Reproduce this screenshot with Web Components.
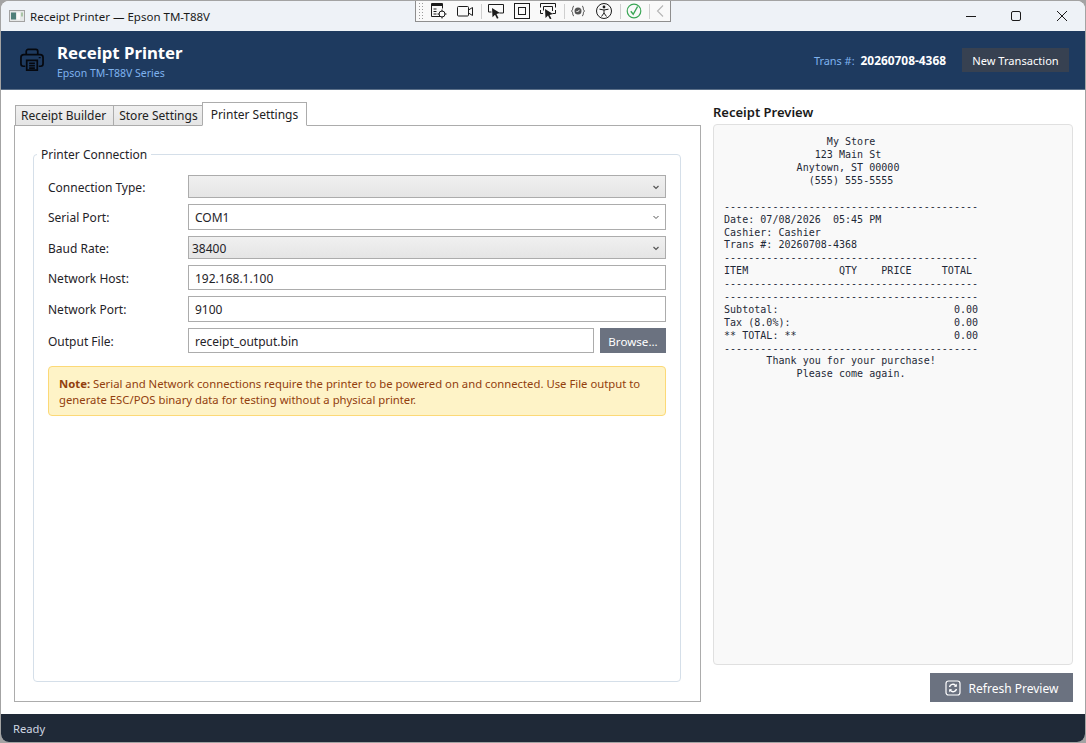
<!DOCTYPE html>
<html>
<head>
<meta charset="utf-8">
<title>Receipt Printer</title>
<style>
    html, body {
        margin: 0;
        height: 100%;
        background: #a3a3a3;
        overflow: hidden;
    }
    body {
        font-family: "Noto Sans", sans-serif;
        font-size: 12px;
        color: #1f2328;
    }
</style>
</head>
<body>
<app-window>
    <title-bar slot="title">Receipt Printer — Epson TM-T88V</title-bar>
    <dev-toolbar slot="overlay"></dev-toolbar>
    <app-header slot="header" trans="20260708-4368"></app-header>

    <tab-control slot="left">
        <tab-item slot="tabs" style="padding-right:7px">Receipt Builder</tab-item>
        <tab-item slot="tabs" style="padding-right:4px">Store Settings</tab-item>
        <tab-item slot="tabs" active>Printer Settings</tab-item>
        <group-box title="Printer Connection">
            <form-row label="Connection Type:" lower><combo-box gray></combo-box></form-row>
            <form-row label="Serial Port:"><combo-box>COM1</combo-box></form-row>
            <form-row label="Baud Rate:" lower><combo-box gray>38400</combo-box></form-row>
            <form-row label="Network Host:" lower><text-box short>192.168.1.100</text-box></form-row>
            <form-row label="Network Port:"><text-box>9100</text-box></form-row>
            <form-row label="Output File:" lower><text-box short>receipt_output.bin</text-box><app-button slot="after" browse>Browse...</app-button></form-row>
            <note-box><b>Note:</b> Serial and Network connections require the printer to be powered on and connected. Use File output to <br>generate ESC/POS binary data for testing without a physical printer.</note-box>
        </group-box>
    </tab-control>

    <receipt-preview slot="right">                 My Store
               123 Main St
            Anytown, ST 00000
              (555) 555-5555

------------------------------------------
Date: 07/08/2026  05:45 PM
Cashier: Cashier
Trans #: 20260708-4368
------------------------------------------
ITEM               QTY    PRICE     TOTAL
------------------------------------------
------------------------------------------
Subtotal:                             0.00
Tax (8.0%):                           0.00
** TOTAL: **                          0.00
------------------------------------------
       Thank you for your purchase!
            Please come again.</receipt-preview>

    <status-bar slot="status">Ready</status-bar>
</app-window>

<script>
class AppWindow extends HTMLElement {
    connectedCallback() {
        this.attachShadow({mode: 'open'}).innerHTML = `
<style>
    :host {
        display: grid;
        grid-template-rows: 30px 59px 1fr 28px;
        position: relative;
        margin: 1px;
        height: 741px;
        width: 1084px;
        background: #fff;
        border-radius: 8px;
        overflow: hidden;
    }
    .main {
        display: grid;
        grid-template-columns: 687px 360px;
        gap: 12px;
        padding: 12px 12px 12px 13px;
        min-height: 0;
    }
</style>
<slot name="title"></slot>
<slot name="header"></slot>
<div class="main">
    <slot name="left"></slot>
    <slot name="right"></slot>
</div>
<slot name="status"></slot>
<slot name="overlay"></slot>
        `;
    }
}

class TitleBar extends HTMLElement {
    connectedCallback() {
        this.attachShadow({mode: 'open'}).innerHTML = `
<style>
    :host {
        display: flex;
        align-items: center;
        background: #eef2f7;
        font-size: 11.5px;
        color: #1a1a1a;
        padding-left: 8px;
    }
    .app { width: 16px; height: 12px; margin-right: 5px; }
    .text { flex: 1; }
    .ctl { width: 46px; height: 30px; display: flex; align-items: center; justify-content: center; }
</style>
<svg class="app" viewBox="0 0 16 12">
    <rect x=".5" y=".5" width="15" height="11" fill="#e6e8e8" stroke="#a2a2a2"/>
    <rect x="2" y="2.500" width="5" height="7" fill="#4f7f7a"/>
    <rect x="8" y="2.500" width="3" height="7" fill="#fbfbfb"/>
    <rect x="12" y="2.500" width="2" height="4" fill="#a9c4a6"/>
</svg>
<span class="text"><slot></slot></span>
<span class="ctl" style="width:44px;padding-left:2px"><svg width="12" height="12" viewBox="0 0 12 12"><path d="M1 6.500h10" stroke="#1a1a1a" fill="none"/></svg></span>
<span class="ctl"><svg width="12" height="12" viewBox="0 0 12 12"><rect x="1.500" y="1.500" width="9" height="9" rx="1.500" stroke="#1a1a1a" fill="none"/></svg></span>
<span class="ctl"><svg width="12" height="12" viewBox="0 0 12 12"><path d="M1 1l10 10M11 1L1 11" stroke="#1a1a1a" fill="none"/></svg></span>
        `;
    }
}

class DevToolbar extends HTMLElement {
    connectedCallback() {
        this.attachShadow({mode: 'open'}).innerHTML = `
<style>
    :host {
        display: flex;
        align-items: center;
        position: absolute;
        left: 414px;
        top: -1px;
        width: 256px;
        height: 22px;
        box-sizing: border-box;
        background: #f9f9f9;
        border: 1px solid #8e8e8e;
    }
    svg { display: block; flex: none; width: 16px; height: 16px; }
    .grip {
        width: 6px; height: 18px; margin-left: 2px;
        background-image: radial-gradient(#9a9a9a 0.6px, transparent 0.7px);
        background-size: 3px 3px;
    }
    .sep { width: 1px; height: 15px; background: #cfcfcf; flex: none; }
    .s { fill: none; stroke: #1c1c1c; stroke-width: 1; }
</style>
<div class="grip"></div>
<svg style="margin-left:7px" viewBox="0 0 16 16"><path class="s" d="M9 13.500H.5V.5h11v5"/><path d="M1 1h10v2H1z" fill="#1c1c1c"/><path class="s" d="M2.500 6h3M2.500 8.500h3M2.500 11h3"/><circle class="s" cx="11" cy="11" r="3"/><path class="s" d="M11 6.500v2M11 13.500v2M6.500 11h2M13.500 11h2"/></svg>
<svg style="margin-left:10px" viewBox="0 0 16 16"><rect class="s" x=".5" y="3.500" width="11" height="9.500" rx="1"/><path class="s" d="M11.500 7l4-2.500v8l-4-2.500"/></svg>
<div class="sep" style="margin-left:8px"></div>
<svg style="margin-left:6px" viewBox="0 0 16 16"><path class="s" d="M.5 6V1.500h15V10h-4M.5 6v3h3"/><path d="M4 5l8 5-3.500 1 2 4-1.500.8-2-4-2.500 2.400z" fill="#1c1c1c"/></svg>
<svg style="margin-left:10px" viewBox="0 0 16 16"><rect class="s" x=".5" y=".5" width="15" height="15"/><rect class="s" x="4.500" y="4.500" width="7" height="7"/></svg>
<svg style="margin-left:10px" viewBox="0 0 16 16"><path class="s" d="M.5 4.500V.5h15v4M15.500 7v3.500h-3M.5 7v3.500h2.500"/><path class="s" d="M3.500 3.500h9v4.500M3.500 3.500v4"/><path d="M5 6l8 5-3.500 1 2 3.500-1.500.8-2-3.800-2.500 2.400z" fill="#1c1c1c"/></svg>
<div class="sep" style="margin-left:8px"></div>
<svg style="margin-left:5px" viewBox="0 0 16 16"><path d="M4 3C2 3 3.500 7 1.500 8 3.500 9 2 13 4 13M12 3c2 0 .5 4 2.500 5-2 1-.5 5-2.500 5" fill="none" stroke="#555" stroke-width="1"/><circle cx="8" cy="8" r="3.500" fill="#555"/><path d="M6.500 8l1 1 2-2.200" fill="none" stroke="#f9f9f9"/></svg>
<svg style="margin-left:10px" viewBox="0 0 16 16"><circle class="s" cx="8" cy="8" r="7.500"/><circle cx="8" cy="4" r="1.400" fill="#1c1c1c"/><path class="s" d="M3.500 6.200L8 7l4.500-.8M8 7v3M8 10l-2.500 3.500M8 10l2.500 3.500" stroke-width="1.300"/></svg>
<div class="sep" style="margin-left:8px"></div>
<svg style="margin-left:5px" viewBox="0 0 16 16"><circle cx="8" cy="8" r="6.800" fill="none" stroke="#3aa655" stroke-width="1.200"/><path d="M4.800 8.300l2.400 3L11.600 3.500" fill="none" stroke="#3aa655" stroke-width="1.400"/></svg>
<div class="sep" style="margin-left:7px"></div>
<svg style="margin-left:2px" viewBox="0 0 16 16"><path d="M11 2.500L5.500 8l5.500 5.500" fill="none" stroke="#b5b5b5" stroke-width="1.100"/></svg>
        `;
    }
}

class AppHeader extends HTMLElement {
    connectedCallback() {
        this.attachShadow({mode: 'open'}).innerHTML = `
<style>
    :host {
        display: flex;
        align-items: center;
        background: #1e3a5f;
        border-bottom: 1px solid #5b6f88;
        box-sizing: border-box;
        padding: 0 16px 0 19px;
        color: #fff;
    }
    .icon { width: 24px; height: 24px; margin-right: 13px; }
    .titles { flex: 1; display: flex; flex-direction: column; padding-top: 2px; }
    h1 { margin: 0; font-size: 16.8px; line-height: 22px; font-weight: 700; }
    .sub { font-size: 10.5px; line-height: 15px; margin-top: 2px; color: #7fb2ee; }
    .lab { color: #7fb2ee; margin-right: 6px; font-size: 10.9px; }
    .val { font-weight: 700; margin-right: 16px; font-size: 11.9px; }
    button {
        font: inherit;
        font-size: 11.1px;
        color: #fff;
        background: #374151;
        border: 0;
        width: 107px;
        height: 24px;
        padding: 0;
    }
</style>
<svg class="icon" viewBox="0 0 25 25" fill="none" stroke="#05080f" stroke-width="1.800">
    <path d="M6.500 7V3.500a2 2 0 0 1 2-2h8a2 2 0 0 1 2 2V7"/>
    <path d="M5.500 19H3.500a2.500 2.500 0 0 1-2.500-2.500V10a3 3 0 0 1 3-3h17a3 3 0 0 1 3 3v6.500a2.500 2.500 0 0 1-2.500 2.500h-2"/>
    <path d="M7 13h11v10H7z"/>
    <path d="M9.500 16h6M9.500 18.500h6M9.500 21h6"/>
    <path d="M19.500 10h2" stroke-width="1.300"/>
</svg>
<div class="titles">
    <h1>Receipt Printer</h1>
    <span class="sub">Epson TM-T88V Series</span>
</div>
<span class="lab">Trans #:</span>
<span class="val">${this.getAttribute('trans')}</span>
<button>New Transaction</button>
        `;
    }
}

class TabControl extends HTMLElement {
    connectedCallback() {
        this.attachShadow({mode: 'open'}).innerHTML = `
<style>
    :host {
        display: flex;
        flex-direction: column;
        min-height: 0;
    }
    .tabs {
        display: flex;
        align-items: flex-end;
        padding-left: 1px;
        height: 24px;
        position: relative;
        z-index: 1;
        margin-bottom: -1px;
    }
    .panel {
        flex: 1;
        display: flex;
        flex-direction: column;
        border: 1px solid #acacac;
        padding: 20px 19px 19px 18px;
        min-height: 0;
    }
</style>
<div class="tabs"><slot name="tabs"></slot></div>
<div class="panel"><slot></slot></div>
        `;
    }
}

class TabItem extends HTMLElement {
    connectedCallback() {
        this.attachShadow({mode: 'open'}).innerHTML = `
<style>
    :host {
        display: flex;
        align-items: center;
        box-sizing: border-box;
        height: 21px;
        padding: 0 5px;
        margin-left: -1px;
        border: 1px solid #acacac;
        background: linear-gradient(#f0f0f0, #e5e5e5);
        color: #222;
    }
    :host(:first-child) { margin-left: 0; }
    :host([active]) {
        height: 24px;
        padding: 0 8px;
        background: #fff;
        border-bottom-color: #fff;
    }
</style>
<slot></slot>
        `;
    }
}

class GroupBox extends HTMLElement {
    connectedCallback() {
        this.attachShadow({mode: 'open'}).innerHTML = `
<style>
    :host {
        display: flex;
        flex: 1;
        min-height: 0;
    }
    fieldset {
        flex: 1;
        margin: 0;
        border: 1px solid #d5dfe9;
        border-radius: 4px;
        padding: 12px 14px 0 14px;
        min-width: 0;
    }
    legend {
        margin-left: -11px;
        padding: 0 4px;
        line-height: 17px;
    }
</style>
<fieldset>
    <legend>${this.getAttribute('title')}</legend>
    <slot></slot>
</fieldset>
        `;
    }
}

class FormRow extends HTMLElement {
    connectedCallback() {
        this.attachShadow({mode: 'open'}).innerHTML = `
<style>
    :host {
        display: grid;
        grid-template-columns: 140px 1fr auto;
        align-items: center;
        margin-bottom: 6px;
    }
    :host([lower]) label { padding-top: 1px; }
    label { color: #1f2328; }
</style>
<label>${this.getAttribute('label')}</label>
<slot></slot>
<slot name="after"></slot>
        `;
    }
}

class ComboBox extends HTMLElement {
    connectedCallback() {
        this.attachShadow({mode: 'open'}).innerHTML = `
<style>
    :host {
        display: flex;
        align-items: center;
        box-sizing: border-box;
        height: 26px;
        padding: 0 6px;
        border: 1px solid #acacac;
        background: #fff;
    }
    :host([gray]) {
        height: 23px;
        padding: 1px 6px 0 3px;
        background: linear-gradient(#f0f0f0, #e5e5e5);
    }
    .text { flex: 1; }
    svg { display: block; }
    :host([gray]) path { stroke: #555; stroke-width: 1.200; }
</style>
<span class="text"><slot></slot></span>
<svg width="6" height="5" viewBox="0 0 6 5"><path d="M.5 1l2.500 2.500L5.500 1" fill="none" stroke="#555" stroke-width="1"/></svg>
        `;
    }
}

class TextBox extends HTMLElement {
    connectedCallback() {
        this.attachShadow({mode: 'open'}).innerHTML = `
<style>
    :host {
        display: flex;
        align-items: center;
        box-sizing: border-box;
        height: 26px;
        padding: 0 6px;
        border: 1px solid #acacac;
        background: #fff;
    }
    :host([short]) { height: 25px; padding-top: 1px; }
</style>
<slot></slot>
        `;
    }
}

class AppButton extends HTMLElement {
    connectedCallback() {
        this.attachShadow({mode: 'open'}).innerHTML = `
<style>
    :host {
        display: inline-flex;
        align-items: center;
        justify-content: center;
        box-sizing: border-box;
        padding-top: 1px;
        background: #6b7280;
        color: #fff;
    }
    :host([browse]) { width: 66px; height: 25px; margin-left: 6px; font-size: 11.6px; }
    :host([refresh]) { width: 143px; height: 29px; align-self: flex-end; margin-top: 8px; }
</style>
<slot></slot>
        `;
    }
}

class NoteBox extends HTMLElement {
    connectedCallback() {
        this.attachShadow({mode: 'open'}).innerHTML = `
<style>
    :host {
        display: block;
        box-sizing: border-box;
        height: 50px;
        margin-top: 13px;
        padding: 9px 10px;
        background: #fef3c7;
        border: 1px solid #fcd977;
        border-radius: 4px;
        color: #92400e;
        font-size: 11.3px;
        line-height: 16px;
        white-space: nowrap;
    }
</style>
<slot></slot>
        `;
    }
}

class ReceiptPreview extends HTMLElement {
    connectedCallback() {
        this.attachShadow({mode: 'open'}).innerHTML = `
<style>
    :host {
        display: flex;
        flex-direction: column;
        min-height: 0;
    }
    h2 {
        margin: 0;
        font-size: 13px;
        font-weight: 600;
        line-height: 20px;
        padding-bottom: 2px;
        color: #1a1a1a;
    }
    .paper {
        flex: 1;
        box-sizing: border-box;
        background: #f9f9f9;
        border: 1px solid #e0e0e0;
        border-radius: 4px;
        padding: 11.300px 10px 10px;
        font-family: "DejaVu Sans Mono", monospace;
        font-size: 10px;
        letter-spacing: .03px;
        line-height: 12.890px;
        white-space: pre;
        color: #1f2937;
    }
    svg { display: block; margin-right: 8px; }
</style>
<h2>Receipt Preview</h2>
<div class="paper"><slot></slot></div>
<app-button refresh>
    <svg width="16" height="16" viewBox="0 0 16 16" fill="none" stroke="#fff">
        <rect x="1" y="1" width="14" height="14" rx="2.500" stroke-width="1.200"/>
        <path d="M4.500 7a3.500 3.500 0 0 1 6-1.500l.8.800M11.500 9a3.500 3.500 0 0 1-6 1.500l-.8-.8" stroke-width="1.400"/>
        <path d="M11.800 3.800v3h-3zM4.200 12.200v-3h3z" fill="#fff" stroke="none"/>
    </svg>
    Refresh Preview
</app-button>
        `;
    }
}

class StatusBar extends HTMLElement {
    connectedCallback() {
        this.attachShadow({mode: 'open'}).innerHTML = `
<style>
    :host {
        display: flex;
        align-items: center;
        background: #1f2937;
        color: #cfd7e2;
        padding-left: 12px;
        font-size: 11.2px;
    }
</style>
<slot></slot>
        `;
    }
}

customElements.define('app-window', AppWindow);
customElements.define('title-bar', TitleBar);
customElements.define('dev-toolbar', DevToolbar);
customElements.define('app-header', AppHeader);
customElements.define('tab-control', TabControl);
customElements.define('tab-item', TabItem);
customElements.define('group-box', GroupBox);
customElements.define('form-row', FormRow);
customElements.define('combo-box', ComboBox);
customElements.define('text-box', TextBox);
customElements.define('app-button', AppButton);
customElements.define('note-box', NoteBox);
customElements.define('receipt-preview', ReceiptPreview);
customElements.define('status-bar', StatusBar);
</script>
</body>
</html>
